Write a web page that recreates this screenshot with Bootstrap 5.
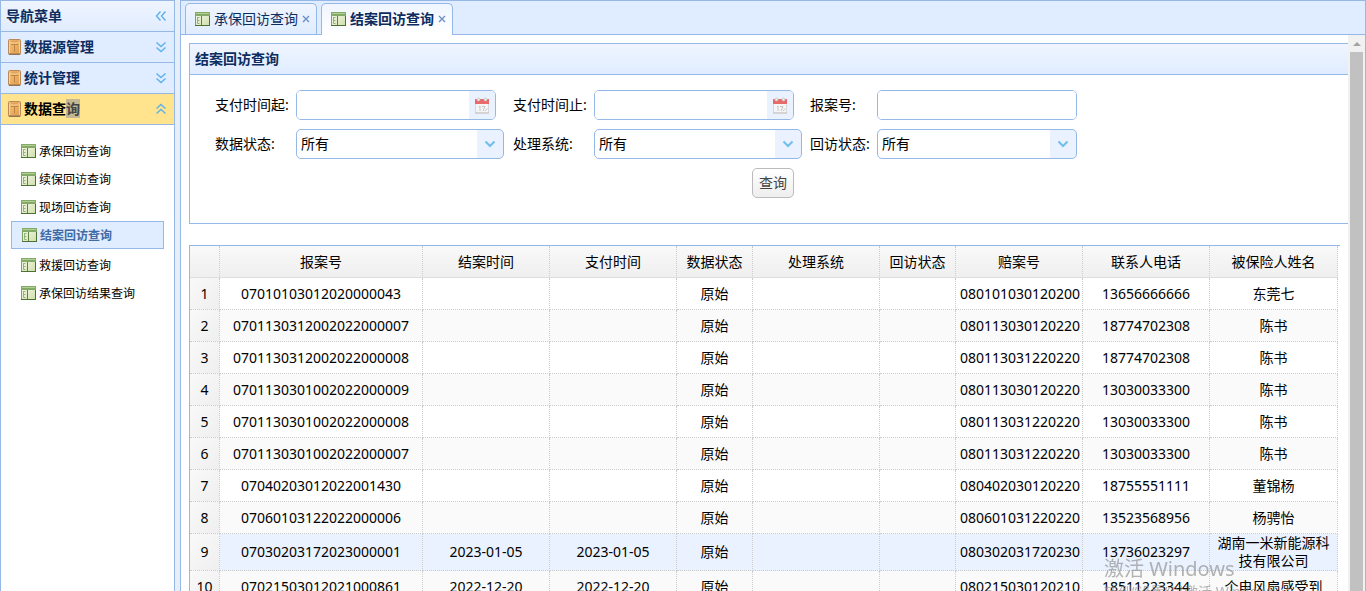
<!DOCTYPE html>
<html lang="zh-CN">
<head>
<meta charset="utf-8">
<meta name="viewport" content="width=device-width, initial-scale=1">
<title>结案回访查询</title>
<link href="https://cdn.jsdelivr.net/npm/bootstrap@5.3.0/dist/css/bootstrap.min.css" rel="stylesheet">
<style>
  :root { --line: #95b8e7; --soft: #e0ecff; --ink: #0e2d5f; --bar: linear-gradient(#eff5ff, #e0ecff); }
  body { font-family: "Noto Sans", "Noto Sans CJK SC", sans-serif; font-size: 14px; line-height: 18px; color: #000; background: #e6eef8; }
  svg { display: block; flex: none; }

  /* sidebar */
  .side { width: 175px; flex: none; background: #fff; border: solid var(--line); border-width: 1px 1px 0; }
  .side-bar { height: 31px; width: 100%; padding: 0 7px 0 7px; gap: 3px; border: 0; border-bottom: 1px solid var(--line); background: var(--soft); color: var(--ink); font-weight: 700; }
  .side-bar.is-title { background: var(--bar); padding-left: 5px; }
  .side-bar.is-open { background: #ffe48d; color: #000; }
  .picked { background: #c3b893; color: #444; }
  .side-menu { padding: 12px 10px; font-size: 12px; }
  .side-menu a { height: 28px; padding: 2px 9px 0; gap: 3px; border: 1px solid transparent; color: #000; text-decoration: none; white-space: nowrap; }
  .side-menu svg { margin-bottom: 3px; }
  .side-menu a.is-on { margin-bottom: 2px; padding-left: 10px; border-color: var(--line); background: var(--soft); color: #416aa3; font-weight: 700; }

  /* tabs */
  .work { border: solid var(--line); border-width: 1px 1px 0; background: #fff; min-width: 0; margin-left: 5px; }
  .tab-strip { height: 34px; padding: 2px 4px 0; gap: 4px; background: var(--soft); border-bottom: 1px solid var(--line); }
  .tab-item { height: 31px; padding: 0 6px 0 9px; border: 1px solid var(--line); border-bottom: 0; border-radius: 5px 5px 0 0; background: var(--bar); color: var(--ink); white-space: nowrap; }
  .tab-item.is-on { height: 32px; padding-bottom: 1px; background: linear-gradient(#eff5ff, #fff); font-weight: 700; }
  .tab-item a { color: inherit; text-decoration: none; gap: 4px; }
  .tab-x { border: 0; padding: 0; margin-left: 4px; background: none; }

  /* search panel */
  .page-area { min-width: 0; padding: 8px 0 0 8px; }
  .box { border: solid var(--line); border-width: 1px 0 1px 1px; height: 181px; }
  .box-head { height: 31px; padding-left: 5px; margin: 0; font-size: 14px; line-height: 30px; font-weight: 700; color: var(--ink); background: var(--bar); border-bottom: 1px solid var(--line); }
  .query { display: grid; grid-template-columns: 81px 217px 81px 216px 67px 200px; grid-auto-rows: 30px; row-gap: 9px; align-items: center; padding: 15px 0 0 25px; }
  .fld { width: 200px; height: 30px; border: 1px solid var(--line); border-radius: 5px; background: #fff; overflow: hidden; }
  .fld input { border: 0; outline: 0; min-width: 0; padding: 0 5px; }
  .fld button { width: 26px; flex: none; border: 0; padding: 0; background: #eaf2ff; }
  .pick { width: 208px; height: 30px; padding: 0 30px 0 4px; border: 1px solid var(--line); border-radius: 5px; color: #000; appearance: none;
    background: url("data:image/svg+xml,%3Csvg xmlns='http://www.w3.org/2000/svg' viewBox='0 0 12 8'%3E%3Cpath d='M1.500 1.500L6 6L10.500 1.500' fill='none' stroke='%2370bdf0' stroke-width='2'/%3E%3C/svg%3E") right 7px center / 12px 8px no-repeat,
      linear-gradient(#eaf2ff, #eaf2ff) right / 26px 100% no-repeat #fff; }
  .pick.is-short { width: 200px; }
  .go { grid-column: 4; width: 42px; height: 30px; margin-left: 158px; padding: 0; border: 1px solid #bbb; border-radius: 5px; background: linear-gradient(#fff, #eee); color: #444; }

  /* result grid */
  .grid-wrap { margin: 21px 8px 0 0; border: solid var(--line); border-width: 1px 0 0 1px; padding-right: 2px; }
  .result { width: 100%; table-layout: fixed; border-collapse: separate; border-spacing: 0; text-align: center; }
  .result th, .result td { height: 32px; padding: 0 4px; border: 0 dotted #ccc; border-width: 0 1px 1px 0; overflow: hidden; font-weight: 400; }
  .result td { white-space: nowrap; }
  .result td:last-child { white-space: normal; }
  .result thead th { border-bottom: 1px solid #ddd; background: linear-gradient(#f9f9f9, #efefef); }
  .result tbody th { padding: 0; background: linear-gradient(to bottom right, #f9f9f9, #efefef); }
  .result tbody tr:nth-child(even) td { background: #fafafa; }
  .result tbody tr.is-hover td { background: #eaf2ff; }

  /* scroll rail */
  .rail { width: 17px; flex: none; padding: 7px 2px 0; gap: 6px; background: #f1f1f1; }
  .rail i { background: #c1c1c1; width: 13px; }
  .activate { right: 0; top: 557px; left: auto; width: 262px; color: rgba(140,140,140,.65); pointer-events: none; white-space: nowrap; }
  .activate p { margin: 0; font-size: 20px; line-height: 24px; }
  .activate small { font-size: 14px; line-height: 22px; display: block; }
</style>
</head>
<body class="vh-100 overflow-hidden">
<svg width="0" height="0" class="position-absolute" aria-hidden="true">
  <defs>
    <linearGradient id="gold" x2="1" y2="1"><stop stop-color="#f6c67c"/><stop offset="1" stop-color="#dd9a4c"/></linearGradient>
    <linearGradient id="leaf" x2="1" y2="1"><stop stop-color="#f8faef"/><stop offset="1" stop-color="#cfdfa9"/></linearGradient>
    <symbol id="i-book" viewBox="0 0 13 16">
      <rect x=".5" y=".5" width="12" height="15" rx="1" fill="url(#gold)" stroke="#b98a58"/>
      <path d="M1 1.500h11l-2 2.500h-7z" fill="#e2a257"/>
      <path d="M1.500 1.500l2 2.500h6l2-2.500M1.500 3v11M11.500 3v11" fill="none" stroke="#fadcab" stroke-width=".8"/>
      <path d="M3 5.500h7M6.500 5.500v7" fill="none" stroke="#bf8344"/>
      <path d="M1 14.500h11" stroke="#c18a51"/><path d="M1 15.500h11" stroke="#8e735b"/>
    </symbol>
    <symbol id="i-form" viewBox="0 0 15 14">
      <rect x=".5" y=".5" width="14" height="13" fill="url(#leaf)" stroke="#7ba25f"/>
      <path d="M0 0h15v4H0z" fill="#84ab66"/><path d="M1 1.500h13" stroke="#b3cd98"/>
      <path d="M6.500 4v9" stroke="#5f8243"/>
      <path d="M2.500 5v6.500M2.500 5.500h2M2.500 8.500h2M2.500 11.500h2" fill="none" stroke="#8fb378"/>
      <path d="M0 13.500h15M14.500 4v10" stroke="#4d7133"/>
    </symbol>
    <symbol id="i-cal" viewBox="0 0 16 17">
      <path d="M1.500 3h13v13h-13z" fill="#f5f5f5" stroke="#d8d8d8"/>
      <path d="M1 2h14v5H1z" fill="#e86a6a"/>
      <circle cx="4.500" cy="2.500" r="1.500" fill="#eee" stroke="#bbb" stroke-width=".7"/><circle cx="11.500" cy="2.500" r="1.500" fill="#eee" stroke="#bbb" stroke-width=".7"/>
      <path d="M5 10l1-1v5M8 9.500h3l-2 4.500M11 14l2.500-2.500" fill="none" stroke="#c4c4c4"/>
      <path d="M1 16h14" stroke="#c9bfbf"/>
    </symbol>
    <symbol id="i-down" viewBox="0 0 12 12"><path d="M1.500 1.500L6 5.500l4.500-4M1.500 6.500L6 10.500l4.500-4" fill="none" stroke="#5eb0ed" stroke-width="1.400"/></symbol>
    <symbol id="i-x" viewBox="0 0 8 8"><path d="M1 1l6 6M7 1L1 7" stroke="#6d90c4" stroke-width="1.400"/></symbol>
  </defs>
</svg>

<div class="d-flex h-100">
  <aside class="side">
    <div class="side-bar is-title d-flex align-items-center justify-content-between">
      <span>导航菜单</span>
      <svg width="12" height="12" style="transform:rotate(90deg)"><use href="#i-down"/></svg>
    </div>
    <button class="side-bar d-flex align-items-center" type="button"><svg width="13" height="16"><use href="#i-book"/></svg><span>数据源管理</span><svg class="ms-auto" width="12" height="12"><use href="#i-down"/></svg></button>
    <button class="side-bar d-flex align-items-center" type="button"><svg width="13" height="16"><use href="#i-book"/></svg><span>统计管理</span><svg class="ms-auto" width="12" height="12"><use href="#i-down"/></svg></button>
    <button class="side-bar is-open d-flex align-items-center" type="button"><svg width="13" height="16"><use href="#i-book"/></svg><span>数据查<span class="picked">询</span></span><svg class="ms-auto" width="12" height="12" style="transform:rotate(180deg)"><use href="#i-down"/></svg></button>
    <nav class="side-menu d-flex flex-column">
      <a class="d-flex align-items-center" href="#"><svg width="15" height="14"><use href="#i-form"/></svg>承保回访查询</a>
      <a class="d-flex align-items-center" href="#"><svg width="15" height="14"><use href="#i-form"/></svg>续保回访查询</a>
      <a class="d-flex align-items-center" href="#"><svg width="15" height="14"><use href="#i-form"/></svg>现场回访查询</a>
      <a class="d-flex align-items-center is-on" href="#"><svg width="15" height="14"><use href="#i-form"/></svg>结案回访查询</a>
      <a class="d-flex align-items-center" href="#"><svg width="15" height="14"><use href="#i-form"/></svg>救援回访查询</a>
      <a class="d-flex align-items-center" href="#"><svg width="15" height="14"><use href="#i-form"/></svg>承保回访结果查询</a>
    </nav>
  </aside>

  <main class="work flex-grow-1 d-flex flex-column">
    <div class="tab-strip d-flex">
      <div class="tab-item d-flex align-items-center"><a class="d-flex align-items-center" href="#"><svg width="15" height="14"><use href="#i-form"/></svg>承保回访查询</a><button class="tab-x" type="button" aria-label="关闭"><svg width="8" height="8"><use href="#i-x"/></svg></button></div>
      <div class="tab-item is-on d-flex align-items-center"><a class="d-flex align-items-center" href="#"><svg width="15" height="14"><use href="#i-form"/></svg>结案回访查询</a><button class="tab-x" type="button" aria-label="关闭"><svg width="8" height="8"><use href="#i-x"/></svg></button></div>
    </div>

    <div class="d-flex flex-grow-1 overflow-hidden">
      <div class="page-area flex-grow-1">
        <section class="box">
          <h1 class="box-head">结案回访查询</h1>
          <form class="query">
            <label for="from">支付时间起:</label>
            <div class="fld d-flex"><input id="from" class="flex-grow-1" type="text"><button class="d-flex align-items-center justify-content-center" type="button" aria-label="选择日期"><svg width="16" height="17"><use href="#i-cal"/></svg></button></div>
            <label for="to">支付时间止:</label>
            <div class="fld d-flex"><input id="to" class="flex-grow-1" type="text"><button class="d-flex align-items-center justify-content-center" type="button" aria-label="选择日期"><svg width="16" height="17"><use href="#i-cal"/></svg></button></div>
            <label for="no">报案号:</label>
            <div class="fld d-flex"><input id="no" class="flex-grow-1" type="text"></div>
            <label for="state">数据状态:</label>
            <select id="state" class="pick"><option>所有</option></select>
            <label for="sys">处理系统:</label>
            <select id="sys" class="pick"><option>所有</option></select>
            <label for="visit">回访状态:</label>
            <select id="visit" class="pick is-short"><option>所有</option></select>
            <button class="go" type="button">查询</button>
          </form>
        </section>

        <div class="grid-wrap">
          <table class="result">
            <colgroup><col style="width:30px"><col style="width:203px"><col style="width:127px"><col style="width:127px"><col style="width:76px"><col style="width:127px"><col style="width:76px"><col style="width:127px"><col style="width:127px"><col></colgroup>
            <thead><tr><th></th><th>报案号</th><th>结案时间</th><th>支付时间</th><th>数据状态</th><th>处理系统</th><th>回访状态</th><th>赔案号</th><th>联系人电话</th><th>被保险人姓名</th></tr></thead>
            <tbody>
              <tr><th>1</th><td>07010103012020000043</td><td></td><td></td><td>原始</td><td></td><td></td><td>080101030120200</td><td>13656666666</td><td>东莞七</td></tr>
              <tr><th>2</th><td>0701130312002022000007</td><td></td><td></td><td>原始</td><td></td><td></td><td>080113030120220</td><td>18774702308</td><td>陈书</td></tr>
              <tr><th>3</th><td>0701130312002022000008</td><td></td><td></td><td>原始</td><td></td><td></td><td>080113031220220</td><td>18774702308</td><td>陈书</td></tr>
              <tr><th>4</th><td>0701130301002022000009</td><td></td><td></td><td>原始</td><td></td><td></td><td>080113030120220</td><td>13030033300</td><td>陈书</td></tr>
              <tr><th>5</th><td>0701130301002022000008</td><td></td><td></td><td>原始</td><td></td><td></td><td>080113031220220</td><td>13030033300</td><td>陈书</td></tr>
              <tr><th>6</th><td>0701130301002022000007</td><td></td><td></td><td>原始</td><td></td><td></td><td>080113031220220</td><td>13030033300</td><td>陈书</td></tr>
              <tr><th>7</th><td>07040203012022001430</td><td></td><td></td><td>原始</td><td></td><td></td><td>080402030120220</td><td>18755551111</td><td>董锦杨</td></tr>
              <tr><th>8</th><td>07060103122022000006</td><td></td><td></td><td>原始</td><td></td><td></td><td>080601031220220</td><td>13523568956</td><td>杨骋怡</td></tr>
              <tr class="is-hover"><th>9</th><td>07030203172023000001</td><td>2023-01-05</td><td>2023-01-05</td><td>原始</td><td></td><td></td><td>080302031720230</td><td>13736023297</td><td>湖南一米新能源科技有限公司</td></tr>
              <tr><th>10</th><td>07021503012021000861</td><td>2022-12-20</td><td>2022-12-20</td><td>原始</td><td></td><td></td><td>080215030120210</td><td>18511223344</td><td>个电风扇感受到</td></tr>
            </tbody>
          </table>
        </div>
      </div>
      <div class="rail d-flex flex-column align-items-center" aria-hidden="true">
        <svg width="8" height="4" viewBox="0 0 8 4"><path d="M0 4l4-4l4 4z" fill="#a3a3a3"/></svg>
        <i class="flex-grow-1"></i>
      </div>
    </div>
  </main>
</div>

<div class="activate position-fixed">
  <p>激活 Windows</p>
  <small>转到“设置”以激活 Windows。</small>
</div>
<script src="https://cdn.jsdelivr.net/npm/bootstrap@5.3.0/dist/js/bootstrap.bundle.min.js"></script>
</body>
</html>
